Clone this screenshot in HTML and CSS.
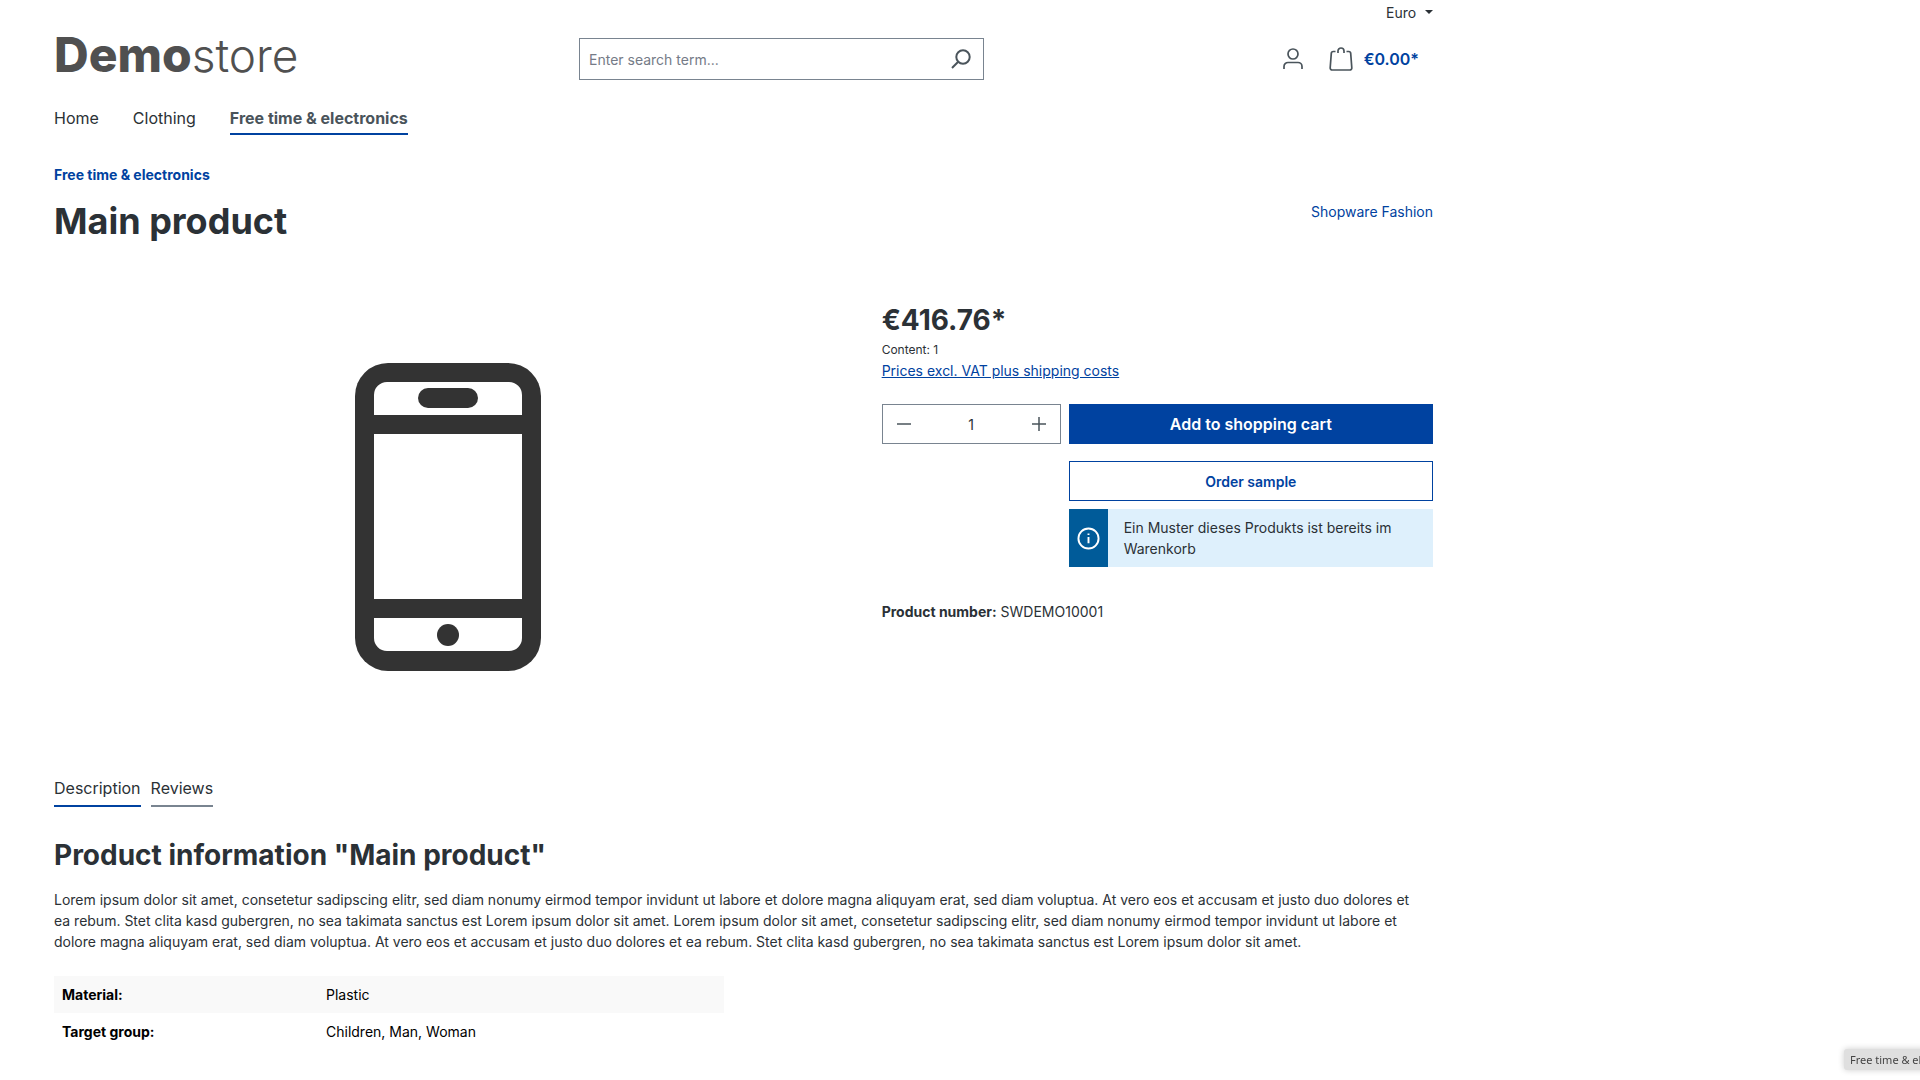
FILE: index.html
```html
<!DOCTYPE html>
<html lang="en">
<head>
    <meta charset="utf-8">
    <title>Main product</title>
    <link rel="stylesheet" href="styles.css">
</head>
<body>
    <div class="container">
        <div class="top-bar">
            <select class="currency" aria-label="Currency">
                <option>Euro</option>
            </select>
            <svg class="caret" viewBox="0 0 8 4"><path d="M0 0h8L4 4z"/></svg>
        </div>

        <header class="header">
            <a href="#" class="logo"><span class="logo-bold">Demo</span><span class="logo-thin">store</span></a>
            <form class="search">
                <input type="search" class="search-input" placeholder="Enter search term..." aria-label="Search">
                <button type="button" class="search-button" aria-label="Search">
                    <svg class="icon-search" viewBox="0 0 20 20"><circle cx="12" cy="8" r="6.7"/><path d="M7.2 12.8L1 19"/></svg>
                </button>
            </form>
            <div class="actions">
                <button class="account-button" aria-label="Your account">
                    <svg class="icon-account" viewBox="0 0 20 22"><circle cx="10" cy="6" r="5"/><path d="M1 21v-2.500a4 4 0 0 1 4-4h10a4 4 0 0 1 4 4V21"/></svg>
                </button>
                <a href="#" class="cart">
                    <svg class="icon-bag" viewBox="0 0 24 24"><path d="M6.500 4.500H4.300a2 2 0 0 0-2 1.900L1.200 20.800a2 2 0 0 0 2 2.200h17.600a2 2 0 0 0 2-2.200L21.700 6.400a2 2 0 0 0-2-1.900H17.500M9 6V4a3 3 0 0 1 6 0v2"/></svg>
                    <span>€0.00*</span>
                </a>
            </div>
        </header>

        <nav class="main-nav">
            <a href="#">Home</a>
            <a href="#">Clothing</a>
            <a href="#" class="active">Free time &amp; electronics</a>
        </nav>

        <a href="#" class="breadcrumb">Free time &amp; electronics</a>

        <div class="product-heading">
            <h1>Main product</h1>
            <a href="#" class="manufacturer">Shopware Fashion</a>
        </div>

        <main class="product">
            <div class="gallery">
                <svg class="product-image" viewBox="0 0 188 310" role="img" aria-label="Main product">
                    <rect x="1" y="1" width="186" height="308" rx="33" fill="#333"/>
                    <path d="M20 53V33a13 13 0 0 1 13-13h122a13 13 0 0 1 13 13v20zM20 72h148v165H20zM20 256h148v20a13 13 0 0 1-13 13H33a13 13 0 0 1-13-13z" fill="#fff"/>
                    <rect x="64" y="26" width="60" height="20" rx="10" fill="#333"/>
                    <circle cx="94" cy="273" r="11" fill="#333"/>
                </svg>
            </div>
            <div class="buy">
                <p class="price">€416.76*</p>
                <p class="content-unit">Content: 1</p>
                <a href="#" class="tax-link">Prices excl. VAT plus shipping costs</a>
                <form class="buy-form">
                    <div class="quantity">
                        <button type="button" aria-label="Decrease quantity">
                            <svg viewBox="0 0 14 14"><path d="M0 7h14"/></svg>
                        </button>
                        <input type="text" inputmode="numeric" value="1" aria-label="Quantity">
                        <button type="button" aria-label="Increase quantity">
                            <svg viewBox="0 0 14 14"><path d="M0 7h14M7 0v14"/></svg>
                        </button>
                    </div>
                    <div class="buy-actions">
                        <button type="button" class="btn btn-buy">Add to shopping cart</button>
                        <button type="button" class="btn btn-sample">Order sample</button>
                        <div class="alert">
                            <div class="alert-icon">
                                <svg viewBox="0 0 24 24"><circle cx="12" cy="12" r="10.500"/><path d="M12 10.500v6.500M12 6.800v1.600"/></svg>
                            </div>
                            <p>Ein Muster dieses Produkts ist bereits im Warenkorb</p>
                        </div>
                    </div>
                </form>
                <p class="product-number"><strong>Product number:</strong> SWDEMO10001</p>
            </div>
        </main>

        <div class="tabs">
            <a href="#description" class="active">Description</a>
            <a href="#">Reviews</a>
        </div>

        <section class="description" id="description">
            <h2>Product information "Main product"</h2>
            <p>Lorem ipsum dolor sit amet, consetetur sadipscing elitr, sed diam nonumy eirmod tempor invidunt ut labore et dolore magna aliquyam erat, sed diam voluptua. At vero eos et accusam et justo duo dolores et ea rebum. Stet clita kasd gubergren, no sea takimata sanctus est Lorem ipsum dolor sit amet. Lorem ipsum dolor sit amet, consetetur sadipscing elitr, sed diam nonumy eirmod tempor invidunt ut labore et dolore magna aliquyam erat, sed diam voluptua. At vero eos et accusam et justo duo dolores et ea rebum. Stet clita kasd gubergren, no sea takimata sanctus est Lorem ipsum dolor sit amet.</p>
            <table class="properties">
                <tr>
                    <th scope="row">Material:</th>
                    <td>Plastic</td>
                </tr>
                <tr>
                    <th scope="row">Target group:</th>
                    <td>Children, Man, Woman</td>
                </tr>
            </table>
        </section>
    </div>

    <div class="status-bubble">Free time &amp; electronics</div>
</body>
</html>
```
FILE: styles.css
```css
* {
    box-sizing: border-box;
}
body {
    margin: 0;
    padding: 0 54px;
    font-family: Inter, sans-serif;
    font-size: 14px;
    line-height: 21px;
    color: #2b3136;
    background-color: #fff;
}
h1, h2, p {
    margin: 0;
}
a {
    color: inherit;
    text-decoration: none;
}
button, input, select {
    font-family: inherit;
    font-size: 14px;
    color: inherit;
    background: none;
    border: none;
    padding: 0;
    margin: 0;
    outline: none;
}
button {
    cursor: pointer;
}
svg {
    display: block;
    fill: none;
    stroke: #4a545b;
    stroke-width: 2;
}
.container {
    max-width: 1379px;
}

/* header */
.top-bar {
    display: flex;
    justify-content: flex-end;
    align-items: center;
    gap: 8px;
    height: 24px;
}
.currency {
    appearance: none;
}
.caret {
    width: 8px;
    height: 4px;
    fill: #2b3136;
    stroke: none;
}
.header {
    display: grid;
    grid-template-columns: 525px 405px 1fr;
    align-items: center;
    height: 70px;
}
.logo {
    padding-bottom: 8px;
    font-size: 48px;
    line-height: 56px;
    color: #505050;
}
.logo-bold {
    font-weight: 800;
}
.logo-thin {
    font-size: 46px;
    font-weight: 300;
}
.search {
    display: flex;
    height: 42px;
    border: 1px solid #798490;
}
.search-input {
    flex: 1;
    padding-left: 9px;
}
.search-input::placeholder {
    color: #757b87;
    opacity: 1;
}
.search-button {
    padding: 0 12px;
}
.icon-search {
    width: 20px;
    height: 20px;
}
.actions {
    display: flex;
    justify-content: flex-end;
    align-items: center;
    gap: 26px;
    padding-right: 14px;
}
.icon-account {
    width: 20px;
    height: 22px;
    stroke-width: 1.7;
}
.cart {
    display: flex;
    align-items: center;
    gap: 11px;
    font-size: 16px;
    font-weight: 600;
    color: #0042a0;
}
.icon-bag {
    width: 24px;
    height: 24px;
    stroke-width: 1.7;
}
.main-nav {
    display: flex;
    gap: 34px;
    padding-top: 12px;
    font-size: 16px;
    line-height: 24px;
}
.main-nav a {
    padding-bottom: 3px;
    border-bottom: 2px solid transparent;
}
.main-nav .active {
    font-weight: 700;
    color: #4a545b;
    border-color: #0042a0;
}

/* product */
.breadcrumb {
    display: inline-block;
    margin-top: 29px;
    font-weight: 700;
    color: #0042a0;
}
.product-heading {
    display: flex;
    justify-content: space-between;
    margin-top: 16px;
}
h1 {
    font-size: 36px;
    line-height: 40px;
    font-weight: 700;
}
.manufacturer {
    color: #0042a0;
}
.product {
    display: grid;
    grid-template-columns: 10fr 7fr;
    gap: 40px;
    margin-top: 57px;
}
.gallery {
    display: flex;
    justify-content: center;
    align-items: center;
    height: 438px;
}
.product-image {
    width: 188px;
    height: 310px;
    stroke: none;
}
.price {
    margin-top: 4px;
    font-size: 28px;
    line-height: 36px;
    font-weight: 700;
}
.content-unit {
    margin-top: 1px;
    font-size: 12px;
}
.tax-link {
    display: block;
    color: #0042a0;
    text-decoration: underline;
}
.buy-form {
    display: grid;
    grid-template-columns: 179px 1fr;
    gap: 8px;
    margin-top: 23px;
    align-items: start;
}
.quantity {
    display: flex;
    height: 40px;
    border: 1px solid #798490;
}
.quantity button {
    padding: 0 14px;
}
.quantity svg {
    width: 14px;
    height: 14px;
    stroke-width: 1.5;
}
.quantity input {
    flex: 1;
    width: 0;
    text-align: center;
}
.btn {
    display: block;
    width: 100%;
    height: 40px;
    font-weight: 600;
}
.btn-buy {
    font-size: 16px;
    color: #fff;
    background-color: #0042a0;
}
.btn-sample {
    margin-top: 17px;
    color: #0042a0;
    border: 1px solid #0042a0;
}
.alert {
    display: flex;
    margin-top: 8px;
    background-color: #def0fc;
}
.alert p {
    padding: 8px 16px;
}
.alert-icon {
    display: flex;
    align-items: center;
    padding: 0 8px;
    background-color: #005b99;
}
.alert-icon svg {
    width: 23px;
    height: 23px;
    stroke: #fff;
}
.product-number {
    margin-top: 34px;
}

/* description */
.tabs {
    display: flex;
    gap: 10px;
    margin-top: 40px;
    font-size: 16px;
    line-height: 24px;
}
.tabs a {
    padding-bottom: 5px;
    border-bottom: 2px solid #798490;
}
.tabs .active {
    border-color: #0042a0;
}
.description h2 {
    margin-top: 30px;
    font-size: 28px;
    line-height: 36px;
    font-weight: 700;
}
.description p {
    margin-top: 16px;
    padding-right: 16px;
}
.properties {
    width: 670px;
    margin-top: 24px;
    border-collapse: collapse;
    color: #000;
}
.properties th,
.properties td {
    padding: 8px;
    text-align: left;
}
.properties th {
    width: 264px;
}
.properties tr:nth-child(odd) {
    background-color: #f9f9f9;
}

/* link preview in the window corner */
.status-bubble {
    position: fixed;
    left: calc(100% - 76px);
    bottom: 10px;
    padding: 0 6px;
    font-family: "Noto Sans", sans-serif;
    font-size: 11px;
    white-space: nowrap;
    color: #444;
    background-color: #dfdfdf;
    border-radius: 3px;
    box-shadow: 0 0 6px rgba(0, 0, 0, 0.2);
}
```
